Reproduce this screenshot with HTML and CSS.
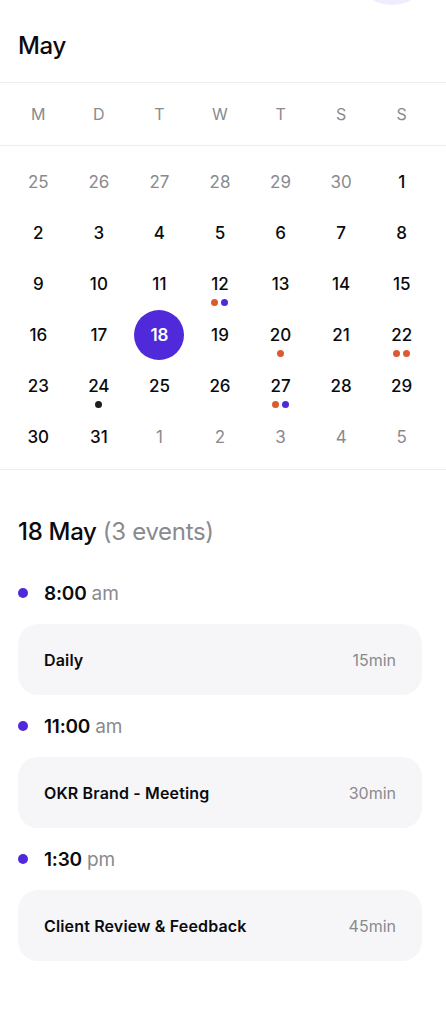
FILE: index.html
```html
<!DOCTYPE html>
<html lang="en">
<head>
<meta charset="utf-8">
<title>Calendar</title>
<link rel="stylesheet" href="styles.css">
</head>
<body>
<div class="app">
  <div class="avatar-row"><div class="avatar"></div></div>
  <h1 class="month">May</h1>
  <div class="weekdays">
    <span>M</span><span>D</span><span>T</span><span>W</span><span>T</span><span>S</span><span>S</span>
  </div>
  <div class="days">
    <div class="day muted"><span class="num">25</span></div>
    <div class="day muted"><span class="num">26</span></div>
    <div class="day muted"><span class="num">27</span></div>
    <div class="day muted"><span class="num">28</span></div>
    <div class="day muted"><span class="num">29</span></div>
    <div class="day muted"><span class="num">30</span></div>
    <div class="day"><span class="num">1</span></div>

    <div class="day"><span class="num">2</span></div>
    <div class="day"><span class="num">3</span></div>
    <div class="day"><span class="num">4</span></div>
    <div class="day"><span class="num">5</span></div>
    <div class="day"><span class="num">6</span></div>
    <div class="day"><span class="num">7</span></div>
    <div class="day"><span class="num">8</span></div>

    <div class="day"><span class="num">9</span></div>
    <div class="day"><span class="num">10</span></div>
    <div class="day"><span class="num">11</span></div>
    <div class="day"><span class="num">12</span><span class="dots"><i class="dot orange"></i><i class="dot purple"></i></span></div>
    <div class="day"><span class="num">13</span></div>
    <div class="day"><span class="num">14</span></div>
    <div class="day"><span class="num">15</span></div>

    <div class="day"><span class="num">16</span></div>
    <div class="day"><span class="num">17</span></div>
    <div class="day selected"><span class="num">18</span></div>
    <div class="day"><span class="num">19</span></div>
    <div class="day"><span class="num">20</span><span class="dots"><i class="dot orange"></i></span></div>
    <div class="day"><span class="num">21</span></div>
    <div class="day"><span class="num">22</span><span class="dots"><i class="dot orange"></i><i class="dot orange"></i></span></div>

    <div class="day"><span class="num">23</span></div>
    <div class="day"><span class="num">24</span><span class="dots"><i class="dot dark"></i></span></div>
    <div class="day"><span class="num">25</span></div>
    <div class="day"><span class="num">26</span></div>
    <div class="day"><span class="num">27</span><span class="dots"><i class="dot orange"></i><i class="dot purple"></i></span></div>
    <div class="day"><span class="num">28</span></div>
    <div class="day"><span class="num">29</span></div>

    <div class="day"><span class="num">30</span></div>
    <div class="day"><span class="num">31</span></div>
    <div class="day muted"><span class="num">1</span></div>
    <div class="day muted"><span class="num">2</span></div>
    <div class="day muted"><span class="num">3</span></div>
    <div class="day muted"><span class="num">4</span></div>
    <div class="day muted"><span class="num">5</span></div>
  </div>

  <section class="events">
    <h2 class="events-title">18 May <span class="count">(3 events)</span></h2>

    <div class="time-row"><i class="time-dot"></i><span class="time">8:00</span><span class="ampm">am</span></div>
    <div class="card"><span class="card-title">Daily</span><span class="card-dur">15min</span></div>

    <div class="time-row"><i class="time-dot"></i><span class="time">11:00</span><span class="ampm">am</span></div>
    <div class="card"><span class="card-title">OKR Brand - Meeting</span><span class="card-dur">30min</span></div>

    <div class="time-row"><i class="time-dot"></i><span class="time">1:30</span><span class="ampm">pm</span></div>
    <div class="card"><span class="card-title">Client Review &amp; Feedback</span><span class="card-dur">45min</span></div>
  </section>
</div>
</body>
</html>
```

FILE: styles.css
```css
* { box-sizing: border-box; }

html, body {
  margin: 0;
  padding: 0;
  background: #ffffff;
}

body {
  font-family: Inter, "Noto Sans", "Liberation Sans", sans-serif;
  color: #0b0b0d;
  -webkit-font-smoothing: antialiased;
}

.app {
  width: 446px;
  min-height: 1018px;
  overflow: hidden;
}

.avatar-row {
  height: 0;
  display: flex;
  justify-content: flex-end;
  padding-right: 14px;
}

.avatar {
  width: 80px;
  height: 80px;
  margin-top: -75px;
  border-radius: 50%;
  background: #efedfb;
  flex: none;
}

.month {
  margin: 0;
  padding: 30px 18px 20px;
  font-size: 24px;
  line-height: 32px;
  font-weight: 500;
  letter-spacing: -0.3px;
  border-bottom: 1px solid #ececee;
}

.weekdays {
  display: grid;
  grid-template-columns: repeat(7, 1fr);
  height: 63px;
  padding: 0 14px 0 8px;
  align-items: center;
  border-bottom: 1px solid #ececee;
  font-size: 16px;
  color: #8a8a8e;
  text-align: center;
}

.days {
  display: grid;
  grid-template-columns: repeat(7, 1fr);
  grid-auto-rows: 51px;
  padding: 10px 14px 7px 8px;
  border-bottom: 1px solid #ececee;
}

.day {
  position: relative;
  display: flex;
  justify-content: center;
  padding-top: 1px;
}

.num {
  width: 50px;
  height: 50px;
  border-radius: 50%;
  display: flex;
  align-items: center;
  justify-content: center;
  font-size: 17px;
  font-weight: 500;
  color: #0b0b0d;
}

.muted .num {
  color: #8a8a8e;
  font-weight: 400;
}

.selected .num {
  background: #5029da;
  color: #ffffff;
  font-weight: 600;
}

.dots {
  position: absolute;
  top: 41px;
  left: 0;
  right: 0;
  display: flex;
  justify-content: center;
  gap: 3px;
}

.dot {
  display: block;
  width: 7px;
  height: 7px;
  border-radius: 50%;
}

.dot.orange { background: #dd5a30; }
.dot.purple { background: #5029da; }
.dot.dark { background: #1e1e20; }

.events {
  padding: 46px 24px 40px 18px;
}

.events-title {
  margin: 0 0 33px;
  font-size: 24px;
  line-height: 32px;
  font-weight: 500;
  letter-spacing: -0.3px;
}

.count {
  color: #8a8a8e;
  font-weight: 400;
}

.time-row {
  display: flex;
  align-items: center;
  height: 24px;
  margin-bottom: 19px;
}

.time-dot {
  width: 10px;
  height: 10px;
  border-radius: 50%;
  background: #5029da;
  margin-right: 16px;
  flex: none;
}

.time {
  font-size: 19px;
  font-weight: 600;
  letter-spacing: -0.2px;
}

.ampm {
  font-size: 19px;
  color: #8a8a8e;
  margin-left: 5px;
}

.card {
  display: flex;
  align-items: center;
  justify-content: space-between;
  height: 71px;
  padding: 0 26px;
  margin-bottom: 19px;
  border-radius: 20px;
  background: #f6f6f8;
}

.card-title {
  font-size: 16px;
  font-weight: 600;
  letter-spacing: 0.15px;
  color: #0b0b0d;
}

.card-dur {
  font-size: 16px;
  color: #8a8a8e;
}
```
